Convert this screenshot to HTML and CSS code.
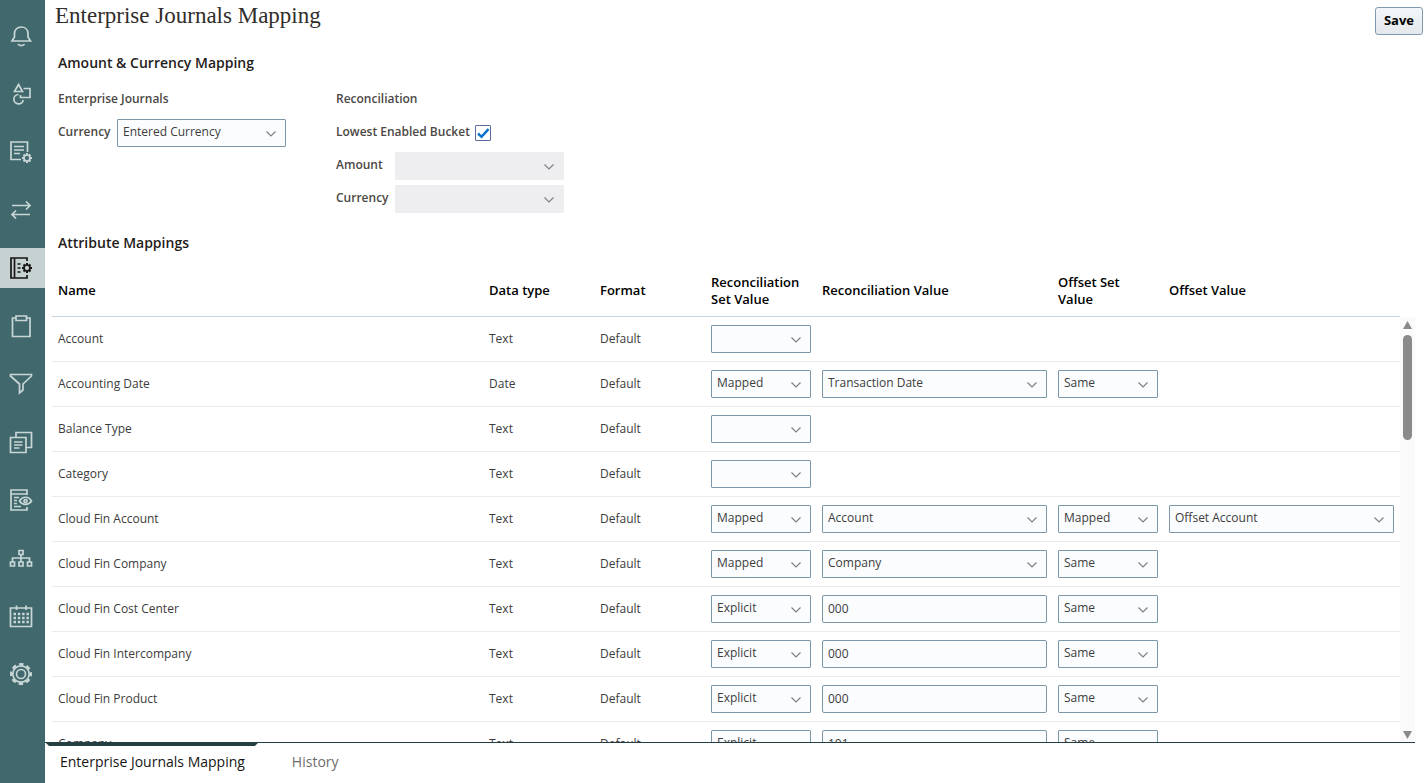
FILE: index.html
```html
<!DOCTYPE html>
<html lang="en">
<head>
    <meta charset="utf-8">
    <title>Enterprise Journals Mapping</title>
    <link rel="stylesheet" href="styles.css">
</head>
<body>

<!-- Navigation -->
<nav class="sidebar">
    <a href="#" aria-label="Notifications">
        <svg viewBox="0 0 24 24"><path d="M3 17h18.500l-2.500-4V9.500C19 5.500 16 3 12.250 3S5.500 5.500 5.500 9.500V13z"/><path d="M9 20c1 2.200 5.500 2.200 6.500 0"/></svg>
    </a>
    <a href="#" aria-label="Application">
        <svg viewBox="0 0 24 24"><path d="M9.500 2.500L13.500 9.500H5.500z"/><path d="M14.500 6.500H21V15.500H11.500V13"/><path d="M9.500 12.500a4.700 4.700 0 1 0 4.700 5.500"/></svg>
    </a>
    <a href="#" aria-label="Formats">
        <svg viewBox="0 0 24 24"><path d="M18.500 12V2H2v17.500h10"/><path d="M5 6.500h10M5 10h10M5 13.500h6"/><circle cx="18" cy="18" r="3"/><path class="teeth" d="M18 15v-2M18 21v2M15 18h-2M21 18h2M15.900 15.900l-1.400-1.400M20.100 20.100l1.400 1.400M20.100 15.900l1.400-1.400M15.900 20.100l-1.400 1.400"/></svg>
    </a>
    <a href="#" aria-label="Exchange">
        <svg viewBox="0 0 24 24"><path d="M3 7.500h18M17 3.500l4 4-4 4M21 16.500H3M7 12.500l-4 4 4 4"/></svg>
    </a>
    <a href="#" class="current" aria-label="Journal mapping">
        <svg viewBox="0 0 24 24"><path d="M18 5V2H2v20h16v-3M5.500 2v20"/><path d="M8.500 8h3M8.500 12h3M8.500 16h3"/><circle cx="18" cy="12" r="3"/><path class="teeth" d="M18 9V7M18 15v2M15 12h-2M21 12h2M15.900 9.900l-1.400-1.400M20.100 14.100l1.400 1.400M20.100 9.900l1.400-1.400M15.900 14.100l-1.400 1.400"/></svg>
    </a>
    <a href="#" aria-label="Tasks">
        <svg viewBox="0 0 24 24"><path d="M7 4H3.500v18.500h17.500V4H17.500"/><path d="M7 2h10.500v4.500H7z"/></svg>
    </a>
    <a href="#" aria-label="Filters">
        <svg viewBox="0 0 24 24"><path d="M1.500 2.500h21v1.500l-8.500 8V18l-3.500 3V12L1.500 4z"/></svg>
    </a>
    <a href="#" aria-label="Reports">
        <svg viewBox="0 0 24 24"><path d="M7 7V2.500h15.500v15h-5"/><path d="M1.500 7.500h15.500v15H1.500z"/><path d="M5 12h8.500M5 15h8.500M5 18h5.500"/></svg>
    </a>
    <a href="#" aria-label="Audit">
        <svg viewBox="0 0 24 24"><path d="M18 7V2H2v20h16v-3M2 6h16"/><path d="M5 9.500h5M5 12.500h3M5 15.500h3M5 18.500h7"/><path d="M10.500 13c3-5 9-5 12 0-3 4.500-9 4.500-12 0z"/><circle cx="16.500" cy="13" r="1.500"/></svg>
    </a>
    <a href="#" aria-label="Organizations">
        <svg viewBox="0 0 24 24"><path d="M10 4.500h4v4h-4zM1.500 16h4v4h-4zM10 16h4v4h-4zM18.500 16h4v4h-4z"/><path d="M12 8.500V16M3.500 16v-4h17v4"/></svg>
    </a>
    <a href="#" aria-label="Calendar">
        <svg viewBox="0 0 24 24"><path d="M1.500 4h21v18.500h-21zM7.500 1.500V6M17 1.500V6"/><path class="dots" d="M4.500 10h15.500M4.500 14h15.500M4.500 18h15.500"/></svg>
    </a>
    <a href="#" aria-label="Settings">
        <svg viewBox="0 0 24 24"><circle cx="12" cy="12" r="4.500"/><circle cx="12" cy="12" r="8.200"/><circle class="cog" cx="12" cy="12" r="9.800"/></svg>
    </a>
</nav>

<main class="page">
    <header class="title-bar">
        <h1>Enterprise Journals Mapping</h1>
        <button type="button" class="save">Save</button>
    </header>

    <div class="content">
        <h2>Amount &amp; Currency Mapping</h2>

        <div class="mapping-form">
            <section>
                <h3>Enterprise Journals</h3>
                <div class="field">
                    <label for="journal-currency">Currency</label>
                    <select id="journal-currency"><option>Entered Currency</option></select>
                </div>
            </section>
            <section>
                <h3>Reconciliation</h3>
                <div class="field check">
                    <label for="lowest-bucket">Lowest Enabled Bucket</label>
                    <input type="checkbox" id="lowest-bucket" checked>
                </div>
                <div class="field">
                    <label for="rec-amount">Amount</label>
                    <select id="rec-amount" disabled><option></option></select>
                </div>
                <div class="field">
                    <label for="rec-currency">Currency</label>
                    <select id="rec-currency" disabled><option></option></select>
                </div>
            </section>
        </div>

        <h2>Attribute Mappings</h2>

        <!-- Attribute table -->
        <div class="attributes">
            <div class="table-view">
                <table>
                    <colgroup>
                        <col>
                        <col class="narrow">
                        <col class="narrow">
                        <col class="narrow">
                        <col class="wide">
                        <col class="narrow">
                        <col class="last">
                    </colgroup>
                    <thead>
                        <tr>
                            <th>Name</th>
                            <th>Data type</th>
                            <th>Format</th>
                            <th>Reconciliation Set Value</th>
                            <th>Reconciliation Value</th>
                            <th>Offset Set Value</th>
                            <th>Offset Value</th>
                        </tr>
                    </thead>
                    <tbody>
                        <tr>
                            <td>Account</td><td>Text</td><td>Default</td>
                            <td><select aria-label="Reconciliation set value"><option></option></select></td>
                            <td></td><td></td><td></td>
                        </tr>
                        <tr>
                            <td>Accounting Date</td><td>Date</td><td>Default</td>
                            <td><select aria-label="Reconciliation set value"><option>Mapped</option></select></td>
                            <td><select aria-label="Reconciliation value"><option>Transaction Date</option></select></td>
                            <td><select aria-label="Offset set value"><option>Same</option></select></td>
                            <td></td>
                        </tr>
                        <tr>
                            <td>Balance Type</td><td>Text</td><td>Default</td>
                            <td><select aria-label="Reconciliation set value"><option></option></select></td>
                            <td></td><td></td><td></td>
                        </tr>
                        <tr>
                            <td>Category</td><td>Text</td><td>Default</td>
                            <td><select aria-label="Reconciliation set value"><option></option></select></td>
                            <td></td><td></td><td></td>
                        </tr>
                        <tr>
                            <td>Cloud Fin Account</td><td>Text</td><td>Default</td>
                            <td><select aria-label="Reconciliation set value"><option>Mapped</option></select></td>
                            <td><select aria-label="Reconciliation value"><option>Account</option></select></td>
                            <td><select aria-label="Offset set value"><option>Mapped</option></select></td>
                            <td><select aria-label="Offset value"><option>Offset Account</option></select></td>
                        </tr>
                        <tr>
                            <td>Cloud Fin Company</td><td>Text</td><td>Default</td>
                            <td><select aria-label="Reconciliation set value"><option>Mapped</option></select></td>
                            <td><select aria-label="Reconciliation value"><option>Company</option></select></td>
                            <td><select aria-label="Offset set value"><option>Same</option></select></td>
                            <td></td>
                        </tr>
                        <tr>
                            <td>Cloud Fin Cost Center</td><td>Text</td><td>Default</td>
                            <td><select aria-label="Reconciliation set value"><option>Explicit</option></select></td>
                            <td><input type="text" aria-label="Reconciliation value" value="000"></td>
                            <td><select aria-label="Offset set value"><option>Same</option></select></td>
                            <td></td>
                        </tr>
                        <tr>
                            <td>Cloud Fin Intercompany</td><td>Text</td><td>Default</td>
                            <td><select aria-label="Reconciliation set value"><option>Explicit</option></select></td>
                            <td><input type="text" aria-label="Reconciliation value" value="000"></td>
                            <td><select aria-label="Offset set value"><option>Same</option></select></td>
                            <td></td>
                        </tr>
                        <tr>
                            <td>Cloud Fin Product</td><td>Text</td><td>Default</td>
                            <td><select aria-label="Reconciliation set value"><option>Explicit</option></select></td>
                            <td><input type="text" aria-label="Reconciliation value" value="000"></td>
                            <td><select aria-label="Offset set value"><option>Same</option></select></td>
                            <td></td>
                        </tr>
                        <tr>
                            <td>Company</td><td>Text</td><td>Default</td>
                            <td><select aria-label="Reconciliation set value"><option>Explicit</option></select></td>
                            <td><input type="text" aria-label="Reconciliation value" value="101"></td>
                            <td><select aria-label="Offset set value"><option>Same</option></select></td>
                            <td></td>
                        </tr>
                    </tbody>
                </table>
            </div>
            <div class="scrollbar" aria-hidden="true">
                <div class="arrow up"></div>
                <div class="track"><div class="thumb"></div></div>
                <div class="arrow down"></div>
            </div>
        </div>
    </div>

    <!-- Bottom tabs -->
    <nav class="tabs">
        <a href="#" class="active">Enterprise Journals Mapping</a>
        <a href="#">History</a>
    </nav>
</main>

</body>
</html>
```

FILE: styles.css
```css
* {
    box-sizing: border-box;
}
body {
    margin: 0;
    height: 100vh;
    display: flex;
    overflow: hidden;
    background: #fff;
    color: #3c3c3c;
    font-family: "Open Sans", "Noto Sans", sans-serif;
    font-size: 12px;
    line-height: 16px;
}
h1, h2, h3 {
    margin: 0;
}

/* sidebar */
.sidebar {
    flex: none;
    width: 45px;
    padding-top: 16px;
    display: flex;
    flex-direction: column;
    gap: 18px;
    background: #41696d;
}
.sidebar a {
    height: 40px;
    padding-right: 3px;
    display: flex;
    align-items: center;
    justify-content: center;
    color: #c9d6d6;
}
.sidebar .current {
    background: #c6d1d2;
    color: #161513;
}
.sidebar svg {
    width: 24px;
    height: 24px;
    fill: none;
    stroke: currentColor;
    stroke-width: 1.7;
}
.sidebar .teeth {
    stroke-width: 2;
}
.sidebar .dots {
    stroke-width: 2.5;
    stroke-dasharray: 2.5 1.8;
}
.sidebar .cog {
    stroke-width: 2.4;
    stroke-dasharray: 4.4 3.3;
    stroke-dashoffset: 2.2;
}

/* page */
.page {
    flex: 1;
    min-width: 0;
    display: flex;
    flex-direction: column;
}
.title-bar {
    display: flex;
    justify-content: space-between;
    align-items: flex-start;
    padding: 0 2px 0 10px;
}
h1 {
    font: 23px/32px "Liberation Serif", serif;
    color: #312d2a;
}
.save {
    height: 28px;
    margin-top: 7px;
    padding: 0 8px 2px;
    border: 1px solid #7f9ab0;
    border-radius: 3px;
    background: linear-gradient(#f4f7f9, #e4e8ea);
    color: #000;
    font: 700 13px/16px "Open Sans", "Noto Sans", sans-serif;
}
.content {
    flex: 1;
    min-height: 0;
    display: flex;
    flex-direction: column;
    padding: 18px 10px 0 7px;
}
h2 {
    padding-left: 6px;
    font-size: 14px;
    line-height: 20px;
    font-weight: 600;
    color: #1f1c1a;
}

/* amount and currency form */
.mapping-form {
    display: flex;
    padding: 17px 6px 20px;
}
.mapping-form section {
    width: 278px;
    display: flex;
    flex-direction: column;
    gap: 5px;
}
h3, label {
    font-size: 12px;
    line-height: 18px;
    font-weight: 600;
    color: #4b4845;
}
h3 {
    padding-bottom: 6px;
}
.field {
    height: 28px;
    display: flex;
    align-items: center;
}
.field label {
    width: 59px;
    padding-bottom: 2px;
}
.field select {
    width: 169px;
}
.check label {
    width: auto;
    padding-right: 5px;
}
.check input {
    appearance: none;
    width: 16px;
    height: 16px;
    margin: 0;
    border: 1px solid #5b6a9c;
    border-radius: 1px;
    background: #fff url("data:image/svg+xml,%3Csvg xmlns='http://www.w3.org/2000/svg' viewBox='0 0 14 14'%3E%3Cpath d='M2 7.500l3.500 3.300L12.500 3.200' fill='none' stroke='%230572ce' stroke-width='2.500'/%3E%3C/svg%3E") center / 14px no-repeat;
}

/* form controls */
select, input[type="text"] {
    display: block;
    width: 100%;
    height: 28px;
    margin: 0;
    padding: 0 6px 2px 5px;
    border: 1px solid #7b97a8;
    border-radius: 1px;
    background-color: #fbfcfe;
    color: #3c3c3c;
    font: 12px/16px "Open Sans", "Noto Sans", sans-serif;
}
input[type="text"] {
    border-radius: 2px;
}
select {
    appearance: none;
    background-image: url("data:image/svg+xml,%3Csvg xmlns='http://www.w3.org/2000/svg' viewBox='0 0 10 6'%3E%3Cpath d='M.5.500L5 5 9.500.500' fill='none' stroke='%23808080' stroke-width='1.200'/%3E%3C/svg%3E");
    background-repeat: no-repeat;
    background-position: right 9px top 11px;
    background-size: 10px 6px;
}
select:disabled {
    border-color: #eeeef0;
    background-color: #eeeef0;
    opacity: 1;
}

/* attribute table */
.attributes {
    flex: 1;
    min-height: 0;
    margin-top: 12px;
    display: flex;
}
.table-view {
    flex: 1;
    min-width: 0;
    overflow: hidden;
}
table {
    width: 100%;
    table-layout: fixed;
    border-collapse: separate;
    border-spacing: 0;
}
.narrow {
    width: 111px;
}
.wide {
    width: 236px;
}
.last {
    width: 237px;
}
th, td {
    padding: 8px 5px 8px 6px;
    text-align: left;
    border-bottom: 1px solid #e9eaea;
}
th:last-child, td:last-child {
    padding-right: 6px;
}
th {
    height: 52px;
    font-size: 13px;
    line-height: 17px;
    font-weight: 600;
    color: #000;
    border-bottom-color: #cad6df;
}
td {
    height: 45px;
}
.scrollbar {
    width: 15px;
    margin-top: 52px;
    padding: 4px 0 3px;
    display: flex;
    flex-direction: column;
    align-items: center;
    gap: 6px;
    background: #fafafa;
}
.arrow {
    width: 9px;
    height: 8px;
    background: #8a8a8a;
}
.up {
    clip-path: polygon(50% 0, 100% 100%, 0 100%);
}
.down {
    clip-path: polygon(0 0, 100% 0, 50% 100%);
}
.track {
    flex: 1;
}
.thumb {
    width: 9px;
    height: 105px;
    border-radius: 5px;
    background: #8a8a8a;
}

/* bottom tabs */
.tabs {
    display: flex;
    height: 41px;
    margin-right: 10px;
    border-top: 1px solid #243f41;
}
.tabs a {
    position: relative;
    padding: 9px 14px 0 15px;
    margin-right: 18px;
    font-size: 14px;
    line-height: 20px;
    color: #6f6d6b;
    text-decoration: none;
}
.tabs .active {
    color: #161513;
}
.tabs .active::before {
    content: "";
    position: absolute;
    top: -1px;
    left: 0;
    width: 100%;
    height: 4px;
    background: #243f41;
    clip-path: polygon(0 0, 100% 0, calc(100% - 4px) 100%, 4px 100%);
}
```
